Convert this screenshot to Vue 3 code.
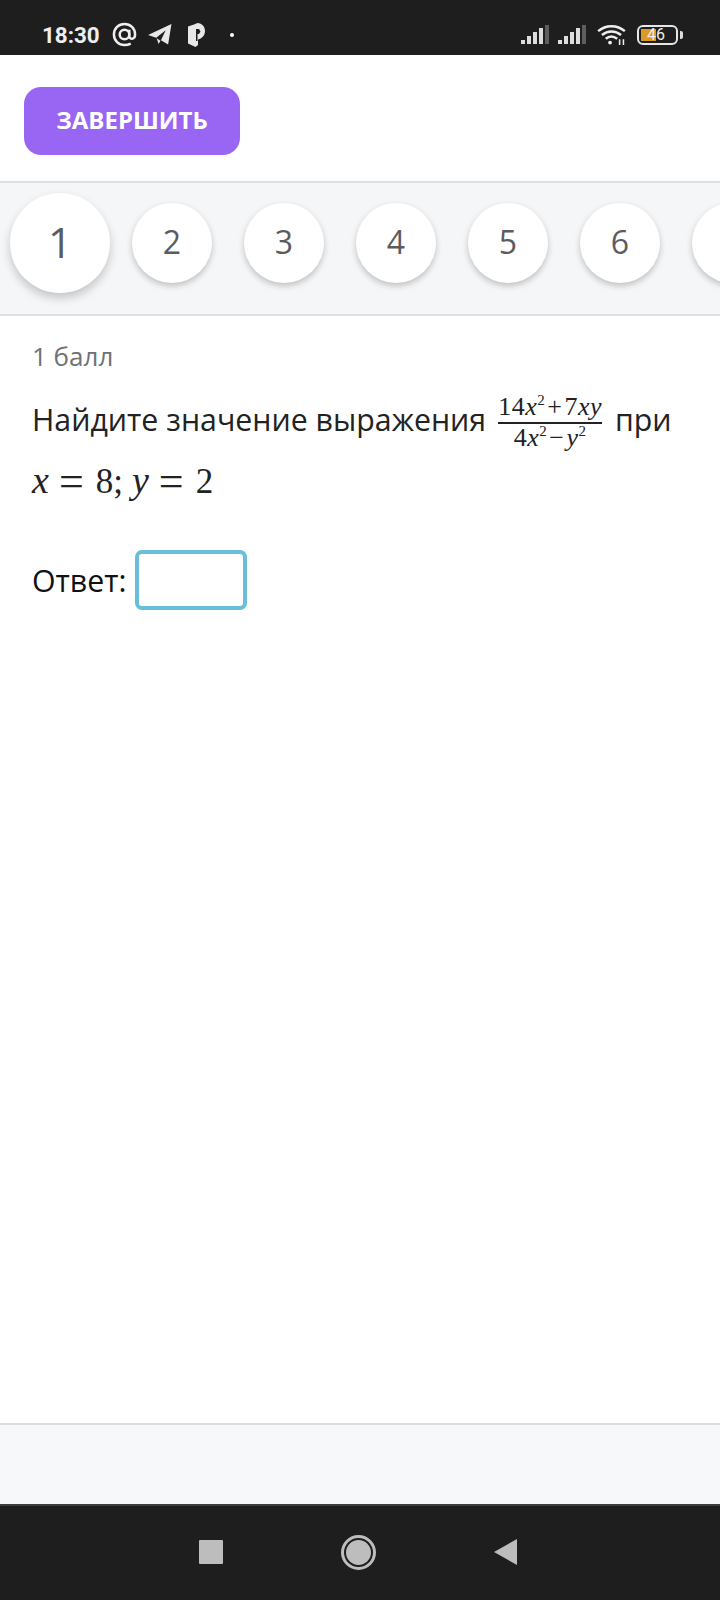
<script setup>
const steps = [2, 3, 4, 5, 6, 7]
</script>

<template>
  <div class="page">
    <header class="status">
      <div class="status-left">
        <span class="time">18:30</span>
        <svg class="ic-at" width="25" height="25" viewBox="0 0 26 26" fill="none" stroke="#eee" stroke-width="2.6">
          <circle cx="13" cy="13" r="5" />
          <path d="M18 8v6.5c0 4 6 4 6-1.500C24 6.500 19 2 13 2S2 6.500 2 13s5 11 11 11c2.500 0 4.500-.5 6.500-1.500" />
        </svg>
        <svg class="ic-tg" width="24" height="21" viewBox="0 0 25 22" fill="#e8e8e8">
          <path d="M0 11.500 24.500 0 21 21.500 13.500 17l5-10.500-10 8z" />
          <path d="M9 15 13 17.500 11 21z" />
        </svg>
        <svg class="ic-p" width="17" height="24" viewBox="0 0 17 24">
          <path fill="#e8e8e8" d="M6 1.500 9.500 0C14 .5 17 3.500 17 8c0 4.500-3 7.500-7 8.500V22l-2.500 2L0 20.500V3.500z" />
          <path fill="#1e1e1e" d="M8 6h3l1.500 2.500-1.500 2.500H9.500v7H8z" />
        </svg>
        <span class="dot"></span>
      </div>
      <div class="status-right">
        <svg class="ic-signal" width="28" height="20" viewBox="0 0 28 20">
          <rect x="0" y="15" width="4" height="4" fill="#ddd" />
          <rect x="6" y="11" width="4" height="8" fill="#ddd" />
          <rect x="12" y="7" width="4" height="12" fill="#ddd" />
          <rect x="18" y="3" width="4" height="16" fill="#ddd" />
          <rect x="24" y="0" width="4" height="19" fill="#5e5e5e" />
        </svg>
        <svg class="ic-signal" width="28" height="20" viewBox="0 0 28 20">
          <rect x="0" y="15" width="4" height="4" fill="#ddd" />
          <rect x="6" y="11" width="4" height="8" fill="#ddd" />
          <rect x="12" y="7" width="4" height="12" fill="#ddd" />
          <rect x="18" y="3" width="4" height="16" fill="#ddd" />
          <rect x="24" y="0" width="4" height="19" fill="#5e5e5e" />
        </svg>
        <svg class="ic-wifi" width="31" height="21" viewBox="0 0 31 22" fill="none" stroke="#eee" stroke-width="2.600">
          <path d="M1.500 7.500c8-7 20-7 28 0" />
          <path d="M5.500 11.500c6-5 14-5 20 0" />
          <path d="M9.500 15.500c3.500-3 8-3 12 0" />
          <circle cx="14" cy="19.500" r="2" fill="#eee" stroke="none" />
          <path d="M24 16v6M28 16v6" stroke-width="1.600" />
        </svg>
        <div class="battery">
          <div class="battery-body">
            <span class="battery-fill"></span>
            <span class="battery-num">46</span>
          </div>
          <span class="battery-cap"></span>
        </div>
      </div>
    </header>

    <div class="actions">
      <button class="finish">ЗАВЕРШИТЬ</button>
    </div>

    <nav class="steps">
      <div class="step current">1</div>
      <div v-for="n in steps" :key="n" class="step">{{ n }}</div>
    </nav>

    <main class="content">
      <div class="points">1 балл</div>
      <p class="question">
        <span class="lead">Найдите значение выражения</span>
        <span class="frac">
          <span class="num">14<i>x</i><sup>2</sup><span class="op">+</span>7<i>xy</i></span>
          <span class="den">4<i>x</i><sup>2</sup><span class="op">−</span><i>y</i><sup>2</sup></span>
        </span>
        <span>при</span>
      </p>
      <p class="formula">
        <i>x</i><span class="eq">=</span><span>8;</span><i class="var-y">y</i><span class="eq">=</span><span>2</span>
      </p>
      <div class="answer">
        <label class="answer-label" for="answer">Ответ:</label>
        <input id="answer" class="answer-input" type="text" />
      </div>
    </main>

    <div class="footer"></div>

    <div class="navbar">
      <span class="nav-square"></span>
      <span class="nav-circle"><span></span></span>
      <svg width="23" height="26" viewBox="0 0 23 26"><path fill="#bdbdbd" d="M0 13 23 0v26z" /></svg>
    </div>
  </div>
</template>

<style>
html, body { margin: 0; padding: 0; background: #fff; }
</style>

<style scoped>
.page {
  width: 720px;
  height: 1600px;
  display: flex;
  flex-direction: column;
  overflow: hidden;
  background: #fff;
  font-family: "Open Sans", sans-serif;
}
.status {
  flex: 0 0 55px;
  height: 55px;
  box-sizing: border-box;
  background: #1e1e1e;
  display: flex;
  justify-content: space-between;
  align-items: center;
  padding: 14px 37px 0 42px;
}
.status-left, .status-right { display: flex; align-items: center; }
.time {
  font-family: Roboto, sans-serif;
  font-weight: 700;
  font-size: 22.4px;
  color: #eee;
  margin-right: 12px;
}
.ic-tg { margin-left: 11px; }
.ic-p { margin-left: 16px; }
.dot { width: 4px; height: 4px; border-radius: 50%; background: #fff; margin-left: 25px; }
.status-right { gap: 9px; }
.ic-wifi { margin-left: 1px; }
.battery { display: flex; align-items: center; margin-left: 1px; }
.battery-body {
  position: relative;
  width: 41px;
  height: 20px;
  box-sizing: border-box;
  border: 2.500px solid #e6e6e6;
  border-radius: 6px;
  overflow: hidden;
}
.battery-fill {
  position: absolute;
  left: 2px;
  top: 2px;
  bottom: 2px;
  width: 15px;
  background: #dc9a25;
}
.battery-num {
  position: absolute;
  left: 8px;
  top: -2px;
  font-family: Roboto, sans-serif;
  font-size: 16px;
  line-height: 20px;
  color: #eee;
}
.battery-cap { width: 3px; height: 8px; background: #ddd; margin-left: 2px; border-radius: 0 2px 2px 0; }

.actions { flex: 0 0 126px; box-sizing: border-box; padding: 32px 24px 0; }
.finish {
  width: 216px;
  height: 68px;
  padding: 0 0 4px;
  border: 0;
  border-radius: 17px;
  background: #9966f4;
  color: #fff;
  font-family: "Open Sans", sans-serif;
  font-weight: 700;
  font-size: 24px;
}

.steps {
  flex: 0 0 135px;
  box-sizing: border-box;
  border-top: 2px solid #dfe0e3;
  border-bottom: 2px solid #dfe0e3;
  background: #f5f6f8;
  display: flex;
  align-items: center;
  gap: 32px;
  padding: 0 0 11px 10px;
  overflow: hidden;
}
.step {
  flex: 0 0 80px;
  box-sizing: border-box;
  width: 80px;
  height: 80px;
  padding-bottom: 4px;
  border-radius: 50%;
  background: #fff;
  box-shadow: 0 3px 6px rgba(0, 0, 0, 0.22);
  display: flex;
  align-items: center;
  justify-content: center;
  color: #5c5c5f;
  font-size: 32px;
}
.step.current {
  flex-basis: 100px;
  width: 100px;
  height: 100px;
  margin-right: -10px;
  font-size: 42px;
  box-shadow: 0 5px 10px rgba(0, 0, 0, 0.2);
}

.content { flex: 1; padding: 0 32px; color: #222; }
.points { margin-top: 23px; font-size: 26px; line-height: 34px; color: #6e7277; }
.question {
  margin: 16px 0 0;
  height: 60px;
  display: flex;
  align-items: center;
  font-size: 30.3px;
  white-space: nowrap;
}
.frac {
  display: inline-flex;
  flex-direction: column;
  align-items: center;
  margin: 6px 13px 0 12px;
  font-family: "Liberation Serif", serif;
  font-size: 26px;
  line-height: 28px;
  letter-spacing: 0.5px;
  color: #222;
}
.num { border-bottom: 2px solid #222; padding: 0 0 1px; }
.frac sup { font-size: 15px; line-height: 0; }
.op { margin: 0 2px; }
.formula {
  margin: 0;
  height: 60px;
  display: flex;
  align-items: baseline;
  line-height: 60px;
  font-family: "Liberation Serif", serif;
  font-size: 35px;
  white-space: pre;
}
.formula i { font-size: 38px; }
.eq { margin: 0 12px 0 10px; font-size: 44px; line-height: 60px; transform: translateY(3px); }
.var-y { margin-left: 9px; }
.answer { margin-top: 41px; display: flex; align-items: center; gap: 9px; }
.answer-label { font-size: 30.3px; color: #111; }
.answer-input {
  width: 112px;
  height: 60px;
  box-sizing: border-box;
  border: 4px solid #68bedb;
  border-radius: 7px;
  outline: none;
  padding: 0;
  background: #fff;
}

.footer {
  flex: 0 0 81px;
  box-sizing: border-box;
  border-top: 2px solid #dcdcde;
  background: #f7f8fa;
}
.navbar {
  flex: 0 0 96px;
  box-sizing: border-box;
  border-top: 2px solid #3c3c3c;
  background: #1e1e1e;
  display: flex;
  align-items: center;
  justify-content: center;
  gap: 118px;
  padding: 0 5px 2px 0;
}
.nav-square { width: 24px; height: 24px; border-radius: 1px; background: #bdbdbd; }
.nav-circle {
  width: 29px;
  height: 29px;
  box-sizing: content-box;
  border: 3px solid #bdbdbd;
  border-radius: 50%;
  display: flex;
  align-items: center;
  justify-content: center;
}
.nav-circle span { width: 25px; height: 25px; border-radius: 50%; background: #bdbdbd; }
</style>
